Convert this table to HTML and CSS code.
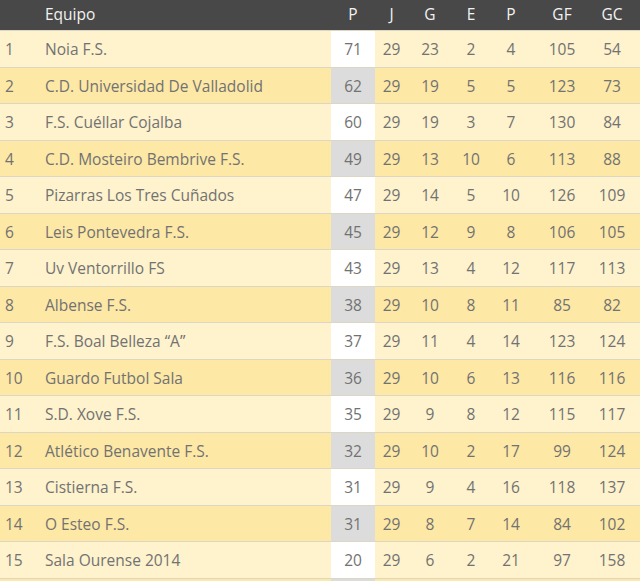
FILE: index.html
```html
<!DOCTYPE html>
<html lang="es">
<head>
<meta charset="utf-8">
<title>Clasificación</title>
<link rel="stylesheet" href="styles.css">
</head>
<body>
<div class="standings">
  <div class="row head">
    <div class="c pos"></div><div class="c team">Equipo</div><div class="c num">P</div><div class="c num">J</div><div class="c num">G</div><div class="c num">E</div><div class="c num">P</div><div class="c num">GF</div><div class="c num">GC</div>
  </div>
  <div class="row odd"><div class="c pos">1</div><div class="c team">Noia F.S.</div><div class="c num pts">71</div><div class="c num">29</div><div class="c num">23</div><div class="c num">2</div><div class="c num">4</div><div class="c num">105</div><div class="c num">54</div></div>
  <div class="row even"><div class="c pos">2</div><div class="c team">C.D. Universidad De Valladolid</div><div class="c num pts">62</div><div class="c num">29</div><div class="c num">19</div><div class="c num">5</div><div class="c num">5</div><div class="c num">123</div><div class="c num">73</div></div>
  <div class="row odd"><div class="c pos">3</div><div class="c team">F.S. Cuéllar Cojalba</div><div class="c num pts">60</div><div class="c num">29</div><div class="c num">19</div><div class="c num">3</div><div class="c num">7</div><div class="c num">130</div><div class="c num">84</div></div>
  <div class="row even"><div class="c pos">4</div><div class="c team">C.D. Mosteiro Bembrive F.S.</div><div class="c num pts">49</div><div class="c num">29</div><div class="c num">13</div><div class="c num">10</div><div class="c num">6</div><div class="c num">113</div><div class="c num">88</div></div>
  <div class="row odd"><div class="c pos">5</div><div class="c team">Pizarras Los Tres Cuñados</div><div class="c num pts">47</div><div class="c num">29</div><div class="c num">14</div><div class="c num">5</div><div class="c num">10</div><div class="c num">126</div><div class="c num">109</div></div>
  <div class="row even"><div class="c pos">6</div><div class="c team">Leis Pontevedra F.S.</div><div class="c num pts">45</div><div class="c num">29</div><div class="c num">12</div><div class="c num">9</div><div class="c num">8</div><div class="c num">106</div><div class="c num">105</div></div>
  <div class="row odd"><div class="c pos">7</div><div class="c team">Uv Ventorrillo FS</div><div class="c num pts">43</div><div class="c num">29</div><div class="c num">13</div><div class="c num">4</div><div class="c num">12</div><div class="c num">117</div><div class="c num">113</div></div>
  <div class="row even"><div class="c pos">8</div><div class="c team">Albense F.S.</div><div class="c num pts">38</div><div class="c num">29</div><div class="c num">10</div><div class="c num">8</div><div class="c num">11</div><div class="c num">85</div><div class="c num">82</div></div>
  <div class="row odd"><div class="c pos">9</div><div class="c team">F.S. Boal Belleza “A”</div><div class="c num pts">37</div><div class="c num">29</div><div class="c num">11</div><div class="c num">4</div><div class="c num">14</div><div class="c num">123</div><div class="c num">124</div></div>
  <div class="row even"><div class="c pos">10</div><div class="c team">Guardo Futbol Sala</div><div class="c num pts">36</div><div class="c num">29</div><div class="c num">10</div><div class="c num">6</div><div class="c num">13</div><div class="c num">116</div><div class="c num">116</div></div>
  <div class="row odd"><div class="c pos">11</div><div class="c team">S.D. Xove F.S.</div><div class="c num pts">35</div><div class="c num">29</div><div class="c num">9</div><div class="c num">8</div><div class="c num">12</div><div class="c num">115</div><div class="c num">117</div></div>
  <div class="row even"><div class="c pos">12</div><div class="c team">Atlético Benavente F.S.</div><div class="c num pts">32</div><div class="c num">29</div><div class="c num">10</div><div class="c num">2</div><div class="c num">17</div><div class="c num">99</div><div class="c num">124</div></div>
  <div class="row odd"><div class="c pos">13</div><div class="c team">Cistierna F.S.</div><div class="c num pts">31</div><div class="c num">29</div><div class="c num">9</div><div class="c num">4</div><div class="c num">16</div><div class="c num">118</div><div class="c num">137</div></div>
  <div class="row even"><div class="c pos">14</div><div class="c team">O Esteo F.S.</div><div class="c num pts">31</div><div class="c num">29</div><div class="c num">8</div><div class="c num">7</div><div class="c num">14</div><div class="c num">84</div><div class="c num">102</div></div>
  <div class="row odd"><div class="c pos">15</div><div class="c team">Sala Ourense 2014</div><div class="c num pts">20</div><div class="c num">29</div><div class="c num">6</div><div class="c num">2</div><div class="c num">21</div><div class="c num">97</div><div class="c num">158</div></div>
  <div class="row even"><div class="c pos"></div><div class="c team"></div><div class="c num pts"></div><div class="c num"></div><div class="c num"></div><div class="c num"></div><div class="c num"></div><div class="c num"></div><div class="c num"></div></div>
</div>
</body>
</html>
```
FILE: styles.css
```css
html, body {
  margin: 0;
  padding: 0;
  overflow: hidden;
  background: #ffffff;
}
body {
  font-family: "Open Sans", "Noto Sans", sans-serif;
  font-size: 15.5px;
  color: #727272;
}
.standings {
  width: 640px;
}
.row {
  display: grid;
  grid-template-columns: 40px 291px 44px 33px 44px 38px 42px 60px 40px 8px;
  box-sizing: border-box;
  height: 36.5px;
  border-top: 1px solid #dcd6c4;
  align-items: stretch;
}
.row.head {
  height: 30px;
  border-top: 0;
  background: #484848;
  color: #f2f2f2;
}
.row.head .c {
  padding-top: 0;
  padding-bottom: 3px;
}
.row.odd { background: #fef3cd; }
.row.even { background: #fde8a5; }
.c {
  display: flex;
  align-items: center;
  white-space: nowrap;
  padding-top: 1px;
  box-sizing: border-box;
}
.pos { padding-left: 5px; }
.team { padding-left: 5px; }
.num { justify-content: center; }
.odd .pts { background: #ffffff; }
.even .pts { background: #dcdcdc; }
```
